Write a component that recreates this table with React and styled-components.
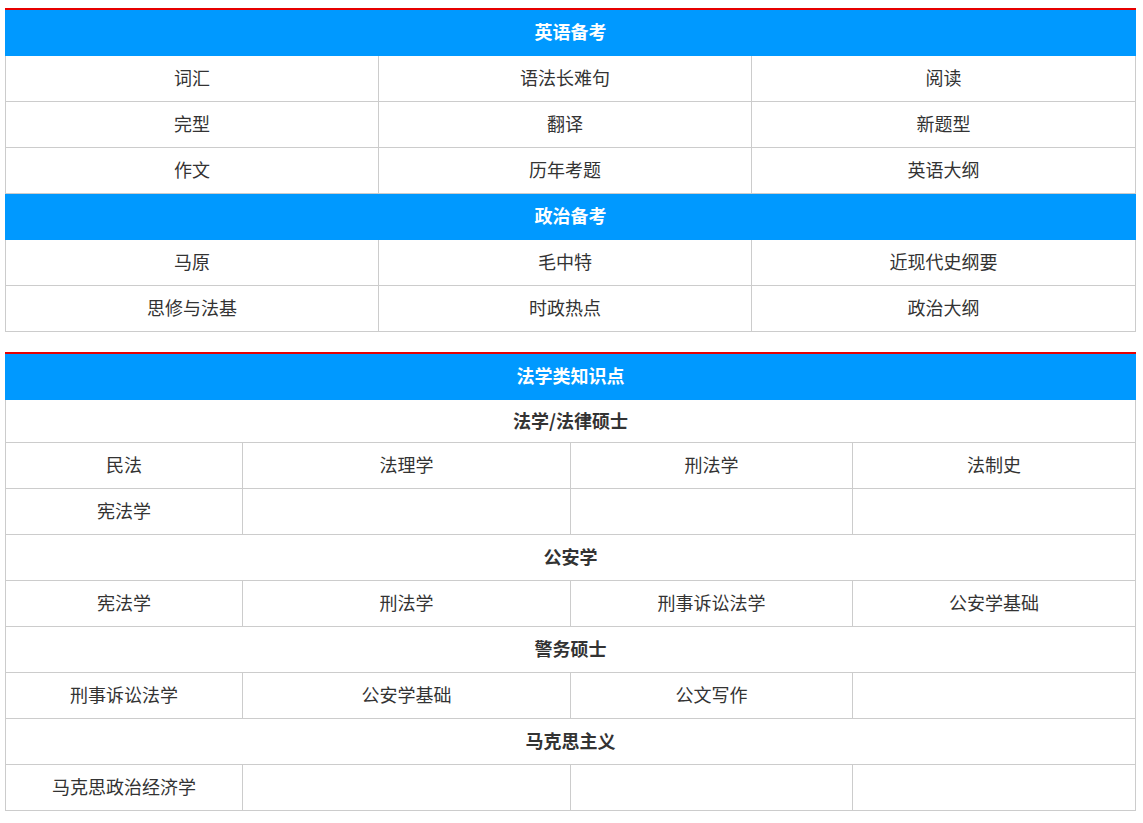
import React from "react";
import styled, { createGlobalStyle } from "styled-components";

const englishRows = [
  ["词汇", "语法长难句", "阅读"],
  ["完型", "翻译", "新题型"],
  ["作文", "历年考题", "英语大纲"],
];

const politicsRows = [
  ["马原", "毛中特", "近现代史纲要"],
  ["思修与法基", "时政热点", "政治大纲"],
];

const lawGroups = [
  {
    title: "法学/法律硕士",
    rows: [
      ["民法", "法理学", "刑法学", "法制史"],
      ["宪法学", "", "", ""],
    ],
  },
  {
    title: "公安学",
    rows: [["宪法学", "刑法学", "刑事诉讼法学", "公安学基础"]],
  },
  {
    title: "警务硕士",
    rows: [["刑事诉讼法学", "公安学基础", "公文写作", ""]],
  },
  {
    title: "马克思主义",
    rows: [["马克思政治经济学", "", "", ""]],
  },
];

function App() {
  return (
    <>
      <GlobalStyle />
      <Page>
        <Table>
          <colgroup>
            <col style={{ width: 373 }} />
            <col style={{ width: 373 }} />
            <col />
          </colgroup>
          <tbody>
            <tr>
              <HeadCell colSpan={3}>英语备考</HeadCell>
            </tr>
            {englishRows.map((row, i) => (
              <tr key={"e" + i}>
                {row.map((c, j) => (
                  <Cell key={j}>{c}</Cell>
                ))}
              </tr>
            ))}
            <tr>
              <HeadCell colSpan={3}>政治备考</HeadCell>
            </tr>
            {politicsRows.map((row, i) => (
              <tr key={"p" + i}>
                {row.map((c, j) => (
                  <Cell key={j}>{c}</Cell>
                ))}
              </tr>
            ))}
          </tbody>
        </Table>

        <Table $spaced>
          <colgroup>
            <col style={{ width: 237 }} />
            <col style={{ width: 328 }} />
            <col style={{ width: 282 }} />
            <col />
          </colgroup>
          <tbody>
            <tr>
              <HeadCell colSpan={4}>法学类知识点</HeadCell>
            </tr>
            {lawGroups.map((g, gi) => (
              <React.Fragment key={gi}>
                <tr>
                  <SubCell colSpan={4} $first={gi === 0}>
                    {g.title}
                  </SubCell>
                </tr>
                {g.rows.map((row, i) => (
                  <tr key={i}>
                    {row.map((c, j) => (
                      <Cell key={j}>{c}</Cell>
                    ))}
                  </tr>
                ))}
              </React.Fragment>
            ))}
          </tbody>
        </Table>
      </Page>
    </>
  );
}

const GlobalStyle = createGlobalStyle`
  body {
    margin: 0;
    background: #fff;
    font-family: "Noto Sans CJK SC", "Noto Sans", sans-serif;
  }
`;

const Page = styled.div`
  padding: 8px 7px 12px 5px;
`;

const Table = styled.table`
  width: 1131px;
  border-collapse: collapse;
  table-layout: fixed;
  border-top: 2px solid #e60000;
  margin-top: ${(p) => (p.$spaced ? "20px" : "0")};
`;

const HeadCell = styled.td`
  height: 42px;
  padding: 0 0 3px;
  background: #0099ff;
  color: #fff;
  font-size: 18px;
  font-weight: bold;
  text-align: center;
  line-height: 20px;
  border: 1px solid #0099ff;
  border-top: none;
`;

const Cell = styled.td`
  height: 42px;
  padding: 0 0 3px;
  border: 1px solid #cccccc;
  color: #333;
  font-size: 18px;
  text-align: center;
  line-height: 20px;
  vertical-align: middle;
`;

const SubCell = styled(Cell)`
  font-weight: bold;
  height: ${(p) => (p.$first ? "39px" : "42px")};
`;

export default App;
